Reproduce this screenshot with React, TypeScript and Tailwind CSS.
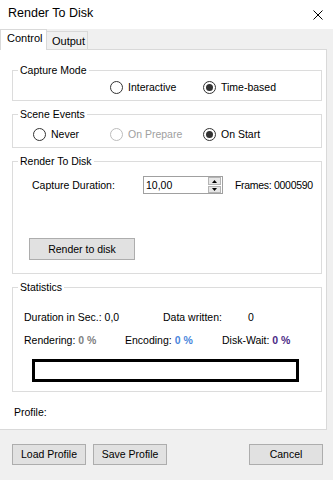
import React from 'react';

type RadioProps = {
  label: string;
  checked?: boolean;
  disabled?: boolean;
  className?: string;
};

function Radio({ label, checked, disabled, className = '' }: RadioProps) {
  return (
    <div className={`flex items-center gap-[5px] ${className}`}>
      <span
        className={`w-[13px] h-[13px] rounded-full border bg-white flex items-center justify-center shrink-0 ${
          disabled ? 'border-[#bcbcbc]' : 'border-[#333333]'
        }`}
      >
        {checked && <span className="w-[7px] h-[7px] rounded-full bg-[#333333]" />}
      </span>
      <span className={`leading-[13px] ${disabled ? 'text-[#a0a0a0]' : 'text-black'}`}>{label}</span>
    </div>
  );
}

type GroupBoxProps = {
  title: string;
  className?: string;
  children?: React.ReactNode;
};

function GroupBox({ title, className = '', children }: GroupBoxProps) {
  return (
    <div className={`relative ml-[12px] w-[310px] border border-[#dcdcdc] ${className}`}>
      <span className="absolute -top-[7px] left-[5px] bg-white px-[2px] leading-[13px] whitespace-nowrap">
        {title}
      </span>
      {children}
    </div>
  );
}

function WinButton({ label, className = '' }: { label: string; className?: string }) {
  return (
    <button
      className={`bg-[#e1e1e1] border border-[#adadad] text-black leading-[13px] flex items-center justify-center ${className}`}
    >
      {label}
    </button>
  );
}

export default function App() {
  return (
    <div className="w-[333px] h-[480px] bg-[#f0f0f0] font-['Liberation_Sans',Arial,sans-serif] text-[10.5px] text-black overflow-hidden">
      {/* title bar */}
      <div className="h-[29px] bg-white flex items-center justify-between pl-[8px] pr-[10px] pb-[2px]">
        <span className="text-[12.5px] leading-[15px]">Render To Disk</span>
        <svg width="10" height="10" viewBox="0 0 10 10" className="mt-[2px]">
          <path d="M0.5 0.5L9.5 9.5M9.5 0.5L0.5 9.5" stroke="#000" strokeWidth="1" fill="none" />
        </svg>
      </div>

      {/* tabs */}
      <div className="h-[20px] flex items-end">
        <div className="relative z-10 -mb-px h-[21px] w-[47px] bg-white border-t border-l border-r border-[#d9d9d9] pl-[6px] pt-[2px] leading-[13px] text-[11px]">
          Control
        </div>
        <div className="h-[18px] w-[41px] bg-[#f0f0f0] border-t border-r border-[#d9d9d9] pl-[5px] pt-[3px] leading-[13px] text-[11px]">
          Output
        </div>
      </div>

      {/* tab page */}
      <div className="w-[327px] h-[381px] bg-white border-t border-r border-b border-[#d9d9d9] flex flex-col">
        <GroupBox title="Capture Mode" className="mt-[20px] h-[31px]">
          <div className="flex pt-[10px] pl-[97px]">
            <Radio label="Interactive" className="w-[93px]" />
            <Radio label="Time-based" checked />
          </div>
        </GroupBox>

        <GroupBox title="Scene Events" className="mt-[13px] h-[34px]">
          <div className="flex pt-[13px] pl-[20px]">
            <Radio label="Never" className="w-[77px]" />
            <Radio label="On Prepare" disabled className="w-[93px]" />
            <Radio label="On Start" checked />
          </div>
        </GroupBox>

        <GroupBox title="Render To Disk" className="mt-[13px] h-[113px]">
          <div className="flex items-center mt-[14px]">
            <span className="ml-[19px] w-[111px] leading-[13px]">Capture Duration:</span>
            <div className="w-[80px] h-[18px] border border-[#a0a0a0] flex items-center">
              <span className="pl-[2px] flex-1 leading-[13px]">10,00</span>
              <div className="w-[13px] h-[16px] flex flex-col gap-[1px] mr-px">
                <div className="h-[8px] bg-[#e6e6e6] border border-[#b4b4b4] flex items-center justify-center">
                  <svg width="5" height="3" viewBox="0 0 5 3">
                    <path d="M2.5 0L5 3H0z" fill="#000" />
                  </svg>
                </div>
                <div className="h-[7px] bg-[#e6e6e6] border border-[#b4b4b4] flex items-center justify-center">
                  <svg width="5" height="3" viewBox="0 0 5 3">
                    <path d="M0 0H5L2.5 3z" fill="#000" />
                  </svg>
                </div>
              </div>
            </div>
            <span className="ml-[12px] leading-[13px] whitespace-nowrap tracking-[-0.3px]">Frames: 0000590</span>
          </div>
          <WinButton label="Render to disk" className="ml-[16px] mt-[44px] w-[106px] h-[22px]" />
        </GroupBox>

        <GroupBox title="Statistics" className="mt-[13px] h-[105px]">
          <div className="flex mt-[23px] pl-[11px] leading-[13px] whitespace-nowrap">
            <span className="w-[139px]">Duration in Sec.: 0,0</span>
            <span className="w-[85px]">Data written:</span>
            <span>0</span>
          </div>
          <div className="flex mt-[10px] pl-[11px] leading-[13px] whitespace-nowrap">
            <span className="w-[101px]">
              Rendering: <b className="text-[#7f7f7f]">0 %</b>
            </span>
            <span className="w-[97px]">
              Encoding: <b className="text-[#4a86dc]">0 %</b>
            </span>
            <span>
              Disk-Wait: <b className="text-[#4b2a86]">0 %</b>
            </span>
          </div>
          <div className="ml-[19px] mt-[12px] w-[267px] h-[23px] border-[3px] border-black" />
        </GroupBox>

        <span className="ml-[14px] mt-[14px] leading-[13px]">Profile:</span>
      </div>

      {/* bottom buttons */}
      <div className="flex mt-[14px]">
        <WinButton label="Load Profile" className="ml-[12px] w-[74px] h-[21px]" />
        <WinButton label="Save Profile" className="ml-[7px] w-[74px] h-[21px]" />
        <WinButton label="Cancel" className="ml-[82px] w-[74px] h-[21px]" />
      </div>
    </div>
  );
}
